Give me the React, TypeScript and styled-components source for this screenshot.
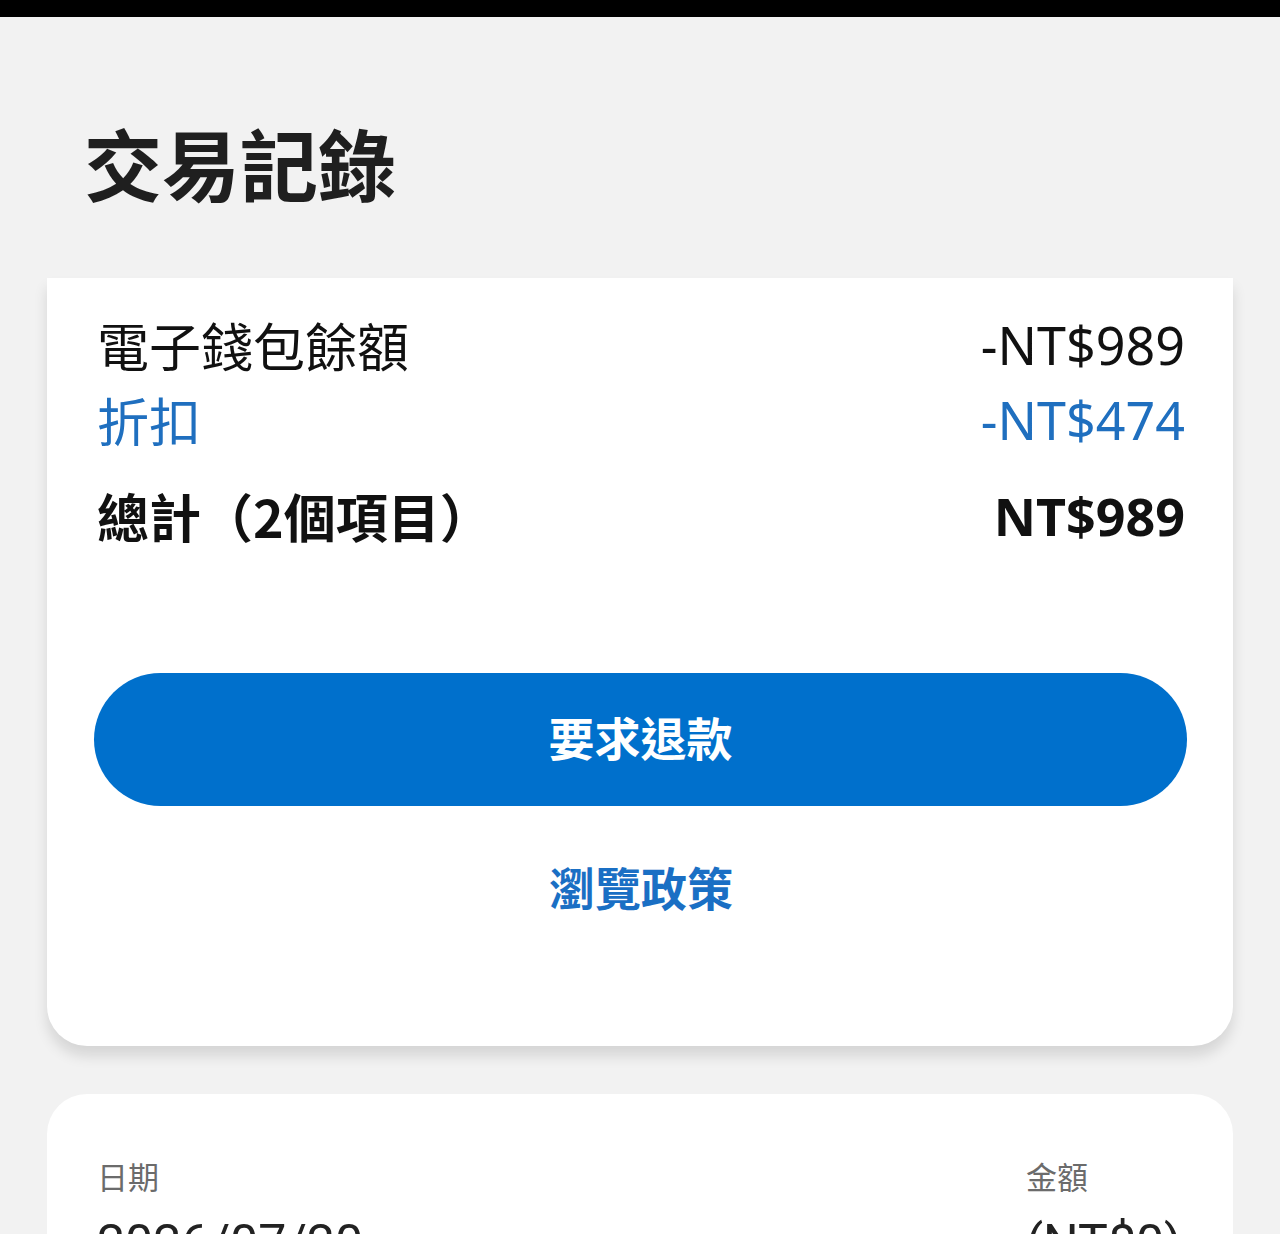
import React from "react";
import styled, { createGlobalStyle } from "styled-components";

const Global = createGlobalStyle`
  html, body { margin: 0; padding: 0; background: #f2f2f2; }
  body { font-family: "Noto Sans", "Noto Sans CJK TC", sans-serif; }
  #root { min-height: 1234px; }
`;

const TopBar = styled.div`
  height: 17px;
  background: #000;
`;

const Page = styled.div`
  display: flex;
  flex-direction: column;
  padding-bottom: 60px;
`;

const Title = styled.h1`
  margin: 0;
  padding: 95px 0 0 84px;
  height: 261px;
  box-sizing: border-box;
  font-family: "Noto Sans CJK TC", sans-serif;
  font-size: 78px;
  line-height: 100px;
  font-weight: 700;
  color: #1f1f1f;
`;

const Card = styled.section<{ $top?: boolean }>`
  margin: 0 47px;
  background: #fff;
  border-radius: ${(p) => (p.$top ? "40px 40px 0 0" : "0 0 40px 40px")};
  box-shadow: ${(p) => (p.$top ? "none" : "0 10px 14px rgba(0,0,0,0.12)")};
  padding: ${(p) => (p.$top ? "58px 48px 0 50px" : "29px 48px 130px 50px")};
  display: flex;
  flex-direction: column;
`;

const SummaryRow = styled.div<{ $tone?: "blue" | "bold" }>`
  display: flex;
  justify-content: space-between;
  align-items: center;
  font-size: 52px;
  line-height: 75px;
  color: ${(p) => (p.$tone === "blue" ? "#1f6fbf" : "#111")};
  font-weight: ${(p) => (p.$tone === "bold" ? 700 : 400)};
  margin-top: ${(p) => (p.$tone === "bold" ? "21px" : "0")};
`;

const Label = styled.span`
  font-family: "Noto Sans CJK TC", sans-serif;
`;

const Amount = styled.span`
  font-family: "Noto Sans", "Noto Sans CJK TC", sans-serif;
`;

const PrimaryButton = styled.button`
  margin: 120px -2px 0 -3px;
  height: 133px;
  border: none;
  border-radius: 67px;
  background: #0070cc;
  color: #fff;
  font-family: "Noto Sans CJK TC", sans-serif;
  font-size: 46px;
  font-weight: 700;
  padding: 0 0 8px;
  cursor: pointer;
`;

const LinkButton = styled.a`
  margin-top: 50px;
  align-self: center;
  color: #1a6fc4;
  font-family: "Noto Sans CJK TC", sans-serif;
  font-size: 46px;
  font-weight: 700;
  line-height: 60px;
  text-decoration: none;
`;

const Gap = styled.div`
  height: 48px;
`;

const HistoryGrid = styled.div`
  display: grid;
  grid-template-columns: 1fr 159px;
`;

const HeadCell = styled.div`
  font-family: "Noto Sans CJK TC", sans-serif;
  font-size: 31px;
  line-height: 48px;
  color: #6b6b6b;
`;

const ValueCell = styled.div`
  font-family: Roboto, "Noto Sans CJK TC", sans-serif;
  font-size: 50px;
  line-height: 60px;
  color: #222;
  margin-top: 13px;
`;

export default function App() {
  return (
    <>
      <Global />
      <TopBar />
      <Page>
        <Title>交易記錄</Title>
        <Card>
          <SummaryRow>
            <Label>電子錢包餘額</Label>
            <Amount>-NT$989</Amount>
          </SummaryRow>
          <SummaryRow $tone="blue">
            <Label>折扣</Label>
            <Amount>-NT$474</Amount>
          </SummaryRow>
          <SummaryRow $tone="bold">
            <Label>總計（2個項目）</Label>
            <Amount>NT$989</Amount>
          </SummaryRow>
          <PrimaryButton>要求退款</PrimaryButton>
          <LinkButton href="#">瀏覽政策</LinkButton>
        </Card>
        <Gap />
        <Card $top>
          <HistoryGrid>
            <HeadCell>日期</HeadCell>
            <HeadCell>金額</HeadCell>
            <ValueCell>2026/07/20</ValueCell>
            <ValueCell>(NT$0)</ValueCell>
          </HistoryGrid>
        </Card>
      </Page>
    </>
  );
}
